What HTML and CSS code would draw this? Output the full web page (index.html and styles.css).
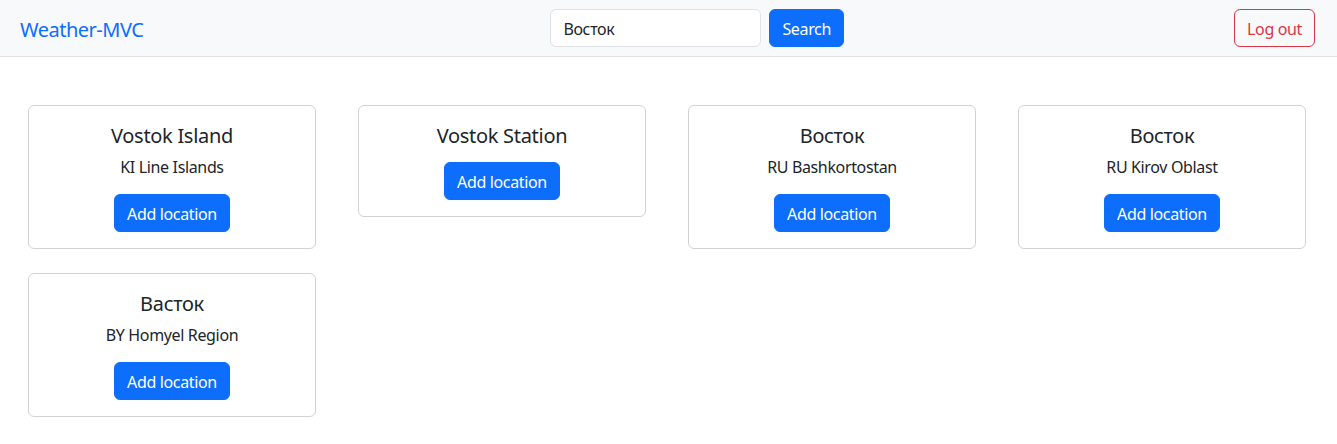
FILE: index.html
```html
<!DOCTYPE html>
<html lang="en">
<head>
<meta charset="utf-8">
<title>Weather-MVC</title>
<link rel="stylesheet" href="styles.css">
</head>
<body>
<nav class="navbar">
  <a class="brand" href="#">Weather-MVC</a>
  <form class="search">
    <input class="search-input" type="text" value="Восток">
    <button class="btn btn-primary" type="button">Search</button>
  </form>
  <button class="btn btn-outline-danger" type="button">Log out</button>
</nav>
<main class="results">
  <div class="card">
    <h5 class="card-title">Vostok Island</h5>
    <p class="card-text">KI Line Islands</p>
    <button class="btn btn-primary" type="button">Add location</button>
  </div>
  <div class="card">
    <h5 class="card-title card-title-solo">Vostok Station</h5>
    <button class="btn btn-primary" type="button">Add location</button>
  </div>
  <div class="card">
    <h5 class="card-title">Восток</h5>
    <p class="card-text">RU Bashkortostan</p>
    <button class="btn btn-primary" type="button">Add location</button>
  </div>
  <div class="card">
    <h5 class="card-title">Восток</h5>
    <p class="card-text">RU Kirov Oblast</p>
    <button class="btn btn-primary" type="button">Add location</button>
  </div>
  <div class="card">
    <h5 class="card-title">Васток</h5>
    <p class="card-text">BY Homyel Region</p>
    <button class="btn btn-primary" type="button">Add location</button>
  </div>
</main>
</body>
</html>
```

FILE: styles.css
```css
* { box-sizing: border-box; }
body {
  margin: 0;
  font-family: "Noto Sans", "Open Sans", sans-serif;
  font-size: 16px;
  line-height: 1.5;
  letter-spacing: -0.35px;
  color: #212529;
  background: #fff;
}
.navbar {
  height: 57px;
  display: flex;
  align-items: center;
  justify-content: space-between;
  padding: 0 22px 1px 20px;
  background: #f8f9fa;
  border-bottom: 1px solid #dee2e6;
}
.brand {
  font-size: 20px;
  line-height: 30px;
  letter-spacing: -0.5px;
  color: #0d6efd;
  text-decoration: none;
  margin-top: 4px;
}
.search {
  display: flex;
  gap: 8px;
  margin: 0 0 0 17px;
}
.search-input {
  width: 211px;
  height: 38px;
  padding: 7px 12px 5px;
  font: inherit;
  letter-spacing: inherit;
  color: #212529;
  border: 1px solid #dee2e6;
  border-radius: 6px;
  background: #fff;
}
.btn {
  height: 38px;
  padding: 7px 12px 5px;
  font: inherit;
  letter-spacing: inherit;
  line-height: 24px;
  border-radius: 6px;
  border: 1px solid transparent;
  cursor: pointer;
}
.btn-primary {
  background: #0d6efd;
  border-color: #0d6efd;
  color: #fff;
}
.btn-outline-danger {
  background: transparent;
  border-color: #dc3545;
  color: #dc3545;
}
.results {
  display: grid;
  grid-template-columns: repeat(4, 288px);
  column-gap: 42px;
  row-gap: 24px;
  align-items: start;
  padding: 48px 0 0 28px;
}
.card {
  display: flex;
  flex-direction: column;
  align-items: center;
  padding: 16px;
  border: 1px solid rgba(0, 0, 0, 0.175);
  border-radius: 6px;
  text-align: center;
}
.card-title {
  margin: 0 0 6px;
  padding-top: 2px;
  font-size: 20px;
  font-weight: 400;
  line-height: 24px;
  letter-spacing: -0.3px;
}
.card-title-solo { margin-bottom: 14px; }
.card-text {
  margin: 0 0 15px;
  padding-top: 1px;
}
```
